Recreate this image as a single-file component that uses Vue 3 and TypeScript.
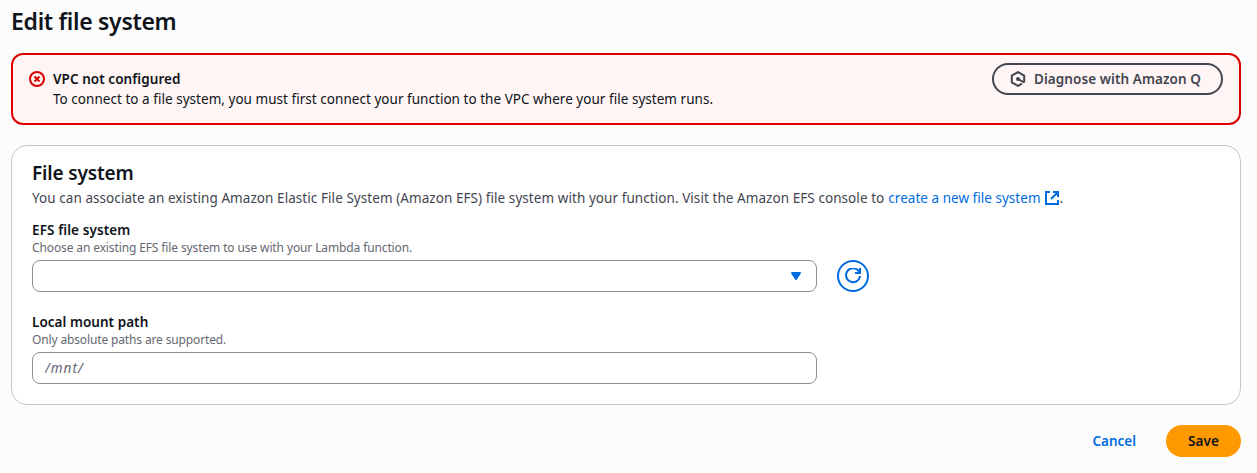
<script setup lang="ts">
import { ref } from 'vue'

const mountPath = ref('')
</script>

<template>
  <main class="page">
    <h1 class="title">Edit file system</h1>

    <section class="alert" role="alert">
      <svg class="icon alert-icon" viewBox="0 0 16 16">
        <circle cx="8" cy="8" r="7" />
        <path d="m10.5 5.5-5 5M10.5 10.5l-5-5" />
      </svg>
      <div class="alert-body">
        <div class="alert-title">VPC not configured</div>
        <div class="alert-text">To connect to a file system, you must first connect your function to the VPC where your file system runs.</div>
      </div>
      <button class="diagnose" type="button">
        <svg class="icon" viewBox="0 0 16 16">
          <path d="M14.2 11.4V4.6L8 1.1 1.8 4.6v6.8L8 14.9l4-2.3" />
          <path d="m8.2 8.1 6 3.4" />
          <circle class="dot" cx="8" cy="8" r="2" />
        </svg>
        <span>Diagnose with Amazon Q</span>
      </button>
    </section>

    <section class="card">
      <h2 class="card-title">File system</h2>
      <p class="description">
        <span class="intro">You can associate an existing Amazon Elastic File System (Amazon EFS) file system with your function. Visit the Amazon EFS console to</span>
        <a class="link">create a new file system</a>
        <svg class="icon external" viewBox="0 0 16 16">
          <path d="M9 2h5v5M7 9l7-7M14 10v4H2V2h4" />
        </svg>
        <span>.</span>
      </p>

      <div class="field efs">
        <div class="label">EFS file system</div>
        <div class="hint">Choose an existing EFS file system to use with your Lambda function.</div>
        <div class="row">
          <button class="control select" type="button" aria-label="EFS file system">
            <svg class="caret" viewBox="0 0 16 16"><path d="M4 5h8l-4 6-4-6z" /></svg>
          </button>
          <button class="refresh" type="button" aria-label="Refresh">
            <svg class="icon" viewBox="0 0 16 16">
              <path d="M10 5h5V0" />
              <path d="M15 8a7 7 0 1 1-.7-4" />
            </svg>
          </button>
        </div>
      </div>

      <div class="field mount">
        <label class="label mount-label" for="mount-path">Local mount path</label>
        <div class="hint mount-hint">Only absolute paths are supported.</div>
        <input id="mount-path" v-model="mountPath" class="control" placeholder="/mnt/" />
      </div>
    </section>

    <footer class="actions">
      <button class="cancel" type="button">Cancel</button>
      <button class="save" type="button">Save</button>
    </footer>
  </main>
</template>

<style>
body {
  background: #fcfcfd;
}
</style>

<style scoped>
.page {
  box-sizing: border-box;
  height: 473px;
  padding: 6px 16px 0 11px;
  overflow: hidden;
  font: 13.5px/20px "Noto Sans", "Open Sans", sans-serif;
  color: #0f141a;
}

button,
input {
  box-sizing: border-box;
  margin: 0;
  padding: 0;
  font: inherit;
}

.icon {
  flex: none;
  width: 16px;
  height: 16px;
  fill: none;
  stroke: currentColor;
  stroke-width: 2;
}

.title {
  margin: 0 0 17px;
  font-size: 23px;
  font-weight: 600;
  line-height: 30px;
  letter-spacing: -0.3px;
}

.alert {
  box-sizing: border-box;
  display: flex;
  align-items: flex-start;
  height: 72px;
  padding: 8px 16px;
  border: 2px solid #db0000;
  border-radius: 12px;
  background: #fff5f5;
}

.alert-icon {
  margin-top: 8px;
  color: #db0000;
}

.alert-body {
  flex: 1;
  margin: 6px 0 0 8px;
}

.alert-title {
  font-weight: 600;
  letter-spacing: 0.06px;
}

.alert-text {
  letter-spacing: 0.035px;
}

.diagnose {
  display: flex;
  align-items: center;
  gap: 8px;
  width: 231px;
  height: 32px;
  padding-left: 16px;
  border: 2px solid #424650;
  border-radius: 20px;
  background: transparent;
  color: #424650;
  font-weight: 600;
  letter-spacing: 0.08px;
  white-space: nowrap;
}

.dot {
  fill: currentColor;
  stroke: none;
}

.card {
  box-sizing: border-box;
  height: 260px;
  margin-top: 20px;
  padding: 15px 20px 0;
  border: 1px solid #c6c6cd;
  border-radius: 16px;
  background: #fff;
}

.card-title {
  margin: 0;
  font-size: 19px;
  font-weight: 600;
  line-height: 24px;
  letter-spacing: -0.16px;
}

.description {
  display: flex;
  align-items: center;
  height: 20px;
  margin: 3px 0 0;
  color: #424650;
  white-space: nowrap;
}

.intro {
  margin-right: 4px;
  letter-spacing: 0.065px;
}

.link {
  color: #006ce0;
  letter-spacing: 0.03px;
}

.external {
  margin: 0 0 0 3px;
  color: #006ce0;
}

.field {
  display: flex;
  flex-direction: column;
}

.efs {
  margin-top: 12px;
}

.mount {
  margin-top: 20px;
}

.label {
  font-weight: 600;
  letter-spacing: 0.1px;
}

.mount-label {
  letter-spacing: 0.04px;
}

.hint {
  margin-bottom: 4px;
  color: #656871;
  font-size: 12px;
  line-height: 16px;
  letter-spacing: -0.12px;
}

.mount-hint {
  letter-spacing: -0.14px;
}

.row {
  display: flex;
  gap: 20px;
}

.control {
  width: 785px;
  height: 32px;
  border: 1px solid #8c8c94;
  border-radius: 8px;
  background: #fff;
  padding: 0 12px;
  outline: none;
}

.control::placeholder {
  color: #656871;
  font-style: italic;
  letter-spacing: 1px;
  opacity: 1;
}

.select {
  display: flex;
  align-items: center;
  justify-content: flex-end;
}

.caret {
  width: 16px;
  height: 16px;
  fill: #006ce0;
  stroke: #006ce0;
  stroke-width: 2;
  stroke-linejoin: round;
}

.refresh {
  display: grid;
  place-items: center;
  width: 32px;
  height: 32px;
  border: 2px solid #006ce0;
  border-radius: 50%;
  background: #fff;
  color: #006ce0;
}

.actions {
  display: flex;
  justify-content: flex-end;
  gap: 8px;
  margin-top: 20px;
}

.cancel,
.save {
  height: 32px;
  border: 0;
  border-radius: 20px;
  font-weight: 600;
}

.cancel {
  padding: 0 22px;
  background: transparent;
  color: #006ce0;
}

.save {
  width: 75px;
  background: #ff9900;
  color: #0f141a;
  letter-spacing: 0.15px;
}
</style>
